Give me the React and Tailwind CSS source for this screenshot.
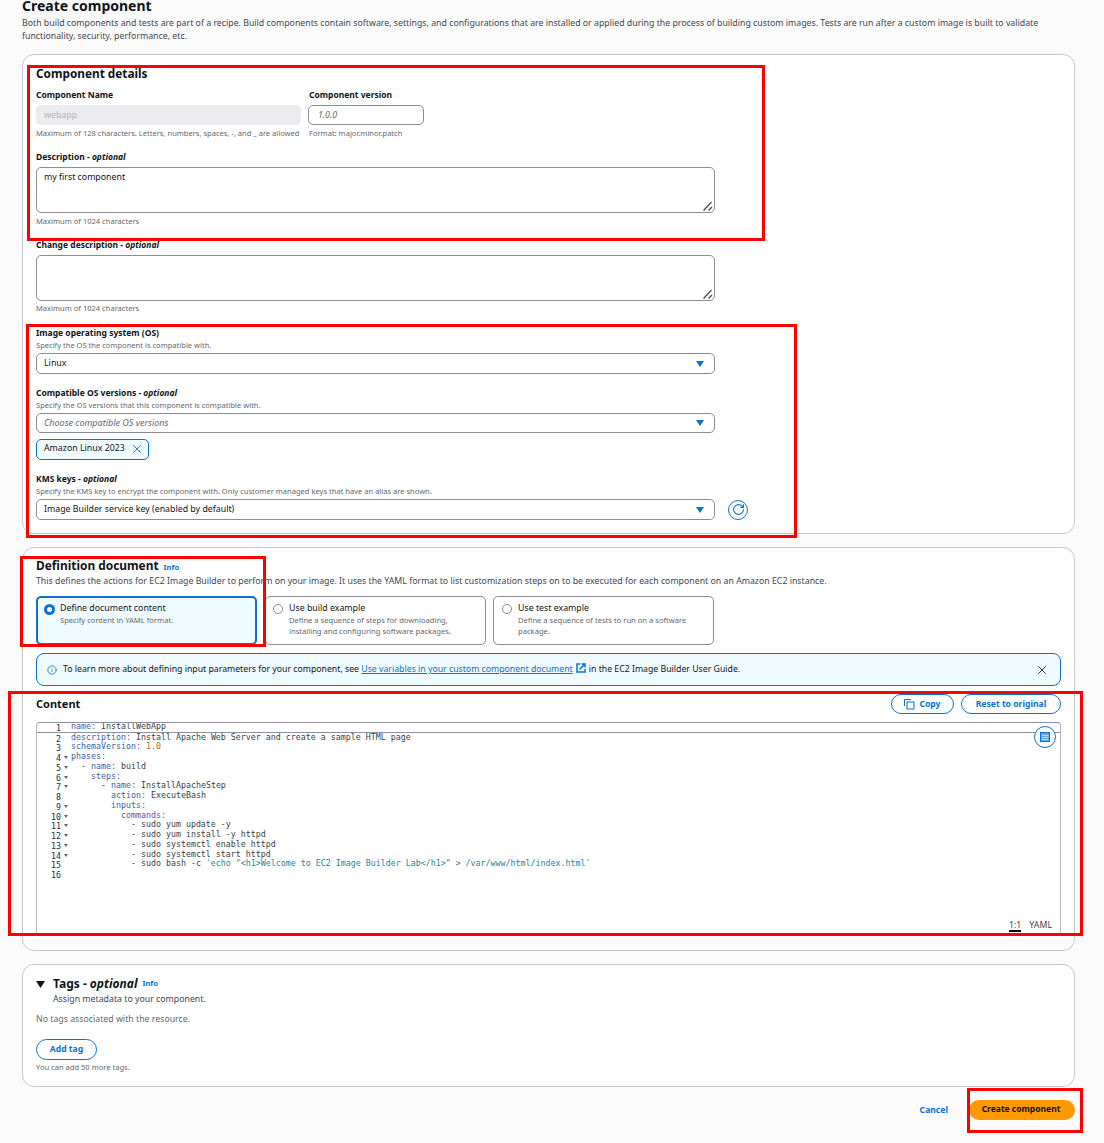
import React from "react";
import { X, RotateCw, Info } from "lucide-react";

const K = "text-[#3d62a8]";
const V = "text-[#3a3f48]";
const N = "text-[#b86a0c]";
const S = "text-[#2f8296]";
const P = "text-[#6a4fb0]";

const codeLines = [
  { fold: false, parts: [["name:", K], [" InstallWebApp", V]] },
  { fold: false, parts: [["description:", K], [" Install Apache Web Server and create a sample HTML page", V]] },
  { fold: false, parts: [["schemaVersion:", K], [" ", V], ["1.0", N]] },
  { fold: true, parts: [["phases:", K]] },
  { fold: true, parts: [["  - ", V], ["name:", K], [" build", V]] },
  { fold: true, parts: [["    ", V], ["steps:", K]] },
  { fold: true, parts: [["      - ", V], ["name:", K], [" InstallApacheStep", V]] },
  { fold: false, parts: [["        ", V], ["action:", K], [" ExecuteBash", V]] },
  { fold: true, parts: [["        ", V], ["inputs:", K]] },
  { fold: true, parts: [["          ", V], ["commands:", P]] },
  { fold: true, parts: [["            - sudo yum update -y", V]] },
  { fold: true, parts: [["            - sudo yum install -y httpd", V]] },
  { fold: true, parts: [["            - sudo systemctl enable httpd", V]] },
  { fold: true, parts: [["            - sudo systemctl start httpd", V]] },
  { fold: false, parts: [["            - sudo bash -c ", V], ["'echo \"<h1>Welcome to EC2 Image Builder Lab</h1>\" > /var/www/html/index.html'", S]] },
  { fold: false, parts: [] },
];

function Label({ children, optional }) {
  return (
    <div className="text-[8.5px] leading-[12px] font-bold text-[#0f141a]">
      {children}
      {optional && (
        <>
          {" - "}
          <i>optional</i>
        </>
      )}
    </div>
  );
}

function Hint({ children, className = "" }) {
  return <div className={`text-[7.56px] leading-[11px] text-[#656871] ${className}`}>{children}</div>;
}

function Area({ value }) {
  return (
    <div className="relative w-[679px] h-[46px]">
      <textarea
        defaultValue={value}
        className="block w-full h-full resize-none border border-[#8c8c94] rounded-[5px] bg-white px-[7px] py-[3px] text-[8.8px] leading-[12px] text-[#0f141a] outline-none"
      />
      <svg width="10" height="10" viewBox="0 0 10 10" className="absolute right-[2px] bottom-[2px]">
        <path d="M0.5 9.5 L8.5 1" stroke="#424650" strokeWidth="1.2" />
        <path d="M5.5 9.5 L9 6" stroke="#424650" strokeWidth="1.2" />
      </svg>
    </div>
  );
}

function Caret() {
  return (
    <svg width="8" height="6" viewBox="0 0 8 6" className="shrink-0">
      <path d="M0 0 H8 L4 6 Z" fill="#0972d3" />
    </svg>
  );
}

function Select({ text, placeholder, h = "h-[21px]" }) {
  return (
    <div className={`w-[679px] ${h} border border-[#8c8c94] rounded-[5px] bg-white flex items-center justify-between pl-[7px] pr-[10px]`}>
      <span className={placeholder ? "text-[9px] italic text-[#656871]" : "text-[8.8px] text-[#0f141a]"}>{text}</span>
      <Caret />
    </div>
  );
}

function Tile({ selected, wide, title, desc, className = "" }) {
  const box = selected
    ? "border-2 border-[#0972d3] bg-[#f0fbff] pl-[6px] gap-[5px] pt-[4px]"
    : wide
    ? "border border-[#8c8c94] bg-white pl-[8px] gap-[6px] pt-[5px]"
    : "border border-[#8c8c94] bg-white pl-[7px] gap-[6px] pt-[5px]";
  return (
    <div className={`h-[49px] rounded-[5px] flex ${box} ${className}`}>
      {selected ? (
        <span className="mt-[2px] w-[11px] h-[11px] rounded-full border-[3px] border-[#0972d3] bg-white shrink-0" />
      ) : (
        <span className="mt-[2px] w-[10px] h-[10px] rounded-full border border-[#8c8c94] bg-white shrink-0" />
      )}
      <div>
        <div className="text-[8.8px] leading-[13px] text-[#0f141a]">{title}</div>
        <div className="text-[7.6px] leading-[11px] text-[#656871]">{desc}</div>
      </div>
    </div>
  );
}

function PillButton({ children, className = "" }) {
  return (
    <button className={`h-[20px] rounded-full border border-[#0972d3] bg-white text-[#0972d3] text-[8.6px] font-bold flex items-center justify-center gap-1 ${className}`}>
      {children}
    </button>
  );
}

function RedBox({ className }) {
  return <div className={`absolute border-[3px] border-[#ff0000] pointer-events-none ${className}`} />;
}

export default function App() {
  return (
    <div className="relative w-[1104px] h-[1143px] overflow-hidden bg-[#fbfbfb] font-['Noto_Sans','Open_Sans',sans-serif] pl-[22px]">
      <h1 className="text-[14px] leading-[14px] font-bold text-[#0f141a] -mt-[1px]">Create component</h1>
      <p className="mt-[4px] w-[1040px] text-[8.78px] leading-[13px] text-[#424650]">
        Both build components and tests are part of a recipe. Build components contain software, settings, and configurations that are installed or applied during the process of building custom images. Tests are run after a custom image is built to validate functionality, security, performance, etc.
      </p>

      <section className="mt-[11px] w-[1053px] h-[480px] bg-white border border-[#c6c6cd] rounded-[12px] pl-[13px] pt-[10px]">
        <h2 className="text-[11.8px] leading-[16px] font-bold text-[#0f141a]">Component details</h2>
        <div className="mt-[8px] flex gap-[7px]">
          <div className="w-[265px]">
            <Label>Component Name</Label>
            <div className="mt-[4px] h-[20px] rounded-[5px] bg-[#ebebf0] flex items-center pl-2 pt-[1px] text-[8.8px] text-[#b4b4bb]">webapp</div>
            <Hint className="mt-[3px] whitespace-nowrap">Maximum of 128 characters. Letters, numbers, spaces, -, and _ are allowed</Hint>
          </div>
          <div className="w-[116px]">
            <div className="ml-[1px]"><Label>Component version</Label></div>
            <div className="mt-[4px] h-[20px] rounded-[5px] border border-[#8c8c94] bg-white flex items-center pl-[9px] pt-[1px] text-[8.8px] italic text-[#656871]">1.0.0</div>
            <Hint className="mt-[3px] ml-[1px]">Format: major.minor.patch</Hint>
          </div>
        </div>

        <div className="mt-[12px]"><Label optional>Description</Label></div>
        <div className="mt-[4px]"><Area value="my first component" /></div>
        <Hint className="mt-[3px]">Maximum of 1024 characters</Hint>

        <div className="mt-[12px]"><Label optional>Change description</Label></div>
        <div className="mt-[4px]"><Area value="" /></div>
        <Hint className="mt-[2px]">Maximum of 1024 characters</Hint>

        <div className="mt-[13px]"><Label>Image operating system (OS)</Label></div>
        <Hint className="mt-[1px]">Specify the OS the component is compatible with.</Hint>
        <div className="mt-[2px]"><Select text="Linux" /></div>

        <div className="mt-[13px]"><Label optional>Compatible OS versions</Label></div>
        <Hint className="mt-[1px]">Specify the OS versions that this component is compatible with.</Hint>
        <div className="mt-[2px]"><Select text="Choose compatible OS versions" placeholder h="h-[20px]" /></div>
        <div className="mt-[6px] w-[113px] h-[21px] rounded-[5px] border border-[#0972d3] bg-[#f0fbff] flex items-center pl-[7px] pb-[1px] gap-[5px] text-[8.8px] text-[#0f141a]">
          Amazon Linux 2023
          <X size={14} strokeWidth={1.5} className="text-[#0972d3]" />
        </div>

        <div className="mt-[13px]"><Label optional>KMS keys</Label></div>
        <Hint className="mt-[1px]">Specify the KMS key to encrypt the component with. Only customer managed keys that have an alias are shown.</Hint>
        <div className="mt-[2px] flex items-center gap-[13px]">
          <Select text="Image Builder service key (enabled by default)" />
          <span className="w-[20px] h-[20px] rounded-full border border-[#0972d3] flex items-center justify-center">
            <RotateCw size={13} strokeWidth={2} className="text-[#0972d3]" />
          </span>
        </div>
      </section>

      <section className="mt-[13px] w-[1053px] h-[404px] bg-white border border-[#c6c6cd] rounded-[12px] pl-[13px] pr-[13px] pt-[9px]">
        <div className="flex items-baseline gap-[5px]">
          <h2 className="text-[11.9px] leading-[16px] font-bold text-[#0f141a]">Definition document</h2>
          <span className="text-[7.6px] font-bold text-[#0972d3]">Info</span>
        </div>
        <p className="mt-[2px] text-[8.78px] leading-[13px] text-[#424650]">
          This defines the actions for EC2 Image Builder to perform on your image. It uses the YAML format to list customization steps on to be executed for each component on an Amazon EC2 instance.
        </p>
        <div className="mt-[8px] flex">
          <Tile selected className="w-[221px]" title="Define document content" desc="Specify content in YAML format." />
          <Tile className="w-[221px] ml-[8px]" title="Use build example" desc={<>Define a sequence of steps for downloading,<br />installing and configuring software packages.</>} />
          <Tile wide className="w-[221px] ml-[7px]" title="Use test example" desc={<>Define a sequence of tests to run on a software<br />package.</>} />
        </div>

        <div className="mt-[8px] h-[33px] rounded-[8px] border border-[#0972d3] bg-[#f0fbff] flex items-center pl-[10px] pr-[11px]">
          <Info size={10} strokeWidth={2} className="text-[#0972d3] shrink-0" />
          <span className="ml-[6px] text-[8.72px] text-[#0f141a] whitespace-nowrap">
            To learn more about defining input parameters for your component, see{" "}
            <span className="text-[#0972d3] underline">Use variables in your custom component document</span>
            <svg width="10" height="10" viewBox="0 0 10 10" fill="none" stroke="#0972d3" strokeWidth="1.5" className="inline ml-[3px] mr-[3px] align-[-1px]">
              <path d="M4 1 H1 V9 H9 V6" />
              <path d="M3.5 6.5 L8.5 1.5 M5.5 1 H9 V4.5" />
            </svg>
            in the EC2 Image Builder User Guide.
          </span>
          <X size={14} strokeWidth={1.6} className="ml-auto text-[#2a2e33]" />
        </div>

        <div className="mt-[8px] flex items-center justify-between">
          <h3 className="text-[11px] font-bold text-[#0f141a]">Content</h3>
          <div className="flex gap-[7px]">
            <PillButton className="w-[63px]">
              <svg width="11" height="11" viewBox="0 0 11 11" fill="none" stroke="#0972d3" strokeWidth="1">
                <path d="M0.5 7 V0.5 H7" />
                <rect x="3" y="3" width="7" height="7" />
              </svg>
              Copy
            </PillButton>
            <PillButton className="w-[100px]">Reset to original</PillButton>
          </div>
        </div>

        <div className="relative mt-[8px] h-[214px] border border-[#b4b4bb] border-t-[#8f8fa8] rounded-t-[4px] bg-white font-['DejaVu_Sans_Mono',monospace] text-[8.3px] leading-[9.75px] overflow-hidden">
          <div className="-mt-[1.5px]">
            {codeLines.map((line, i) => (
              <div key={i} className={`flex h-[9.75px] ${i === 0 ? "border-b border-[#8f8fa8] box-content" : ""}`}>
                <span className="w-[24px] text-right text-[#2a2e33] pt-[2px]">{i + 1}</span>
                <span className="w-[10px] pl-[3px] pt-[4px]">
                  {line.fold && (
                    <svg width="4" height="3" viewBox="0 0 4 3" className="block">
                      <path d="M0 0 H4 L2 3 Z" fill="#656871" />
                    </svg>
                  )}
                </span>
                <span className="whitespace-pre">
                  {line.parts.map(([t, c], j) => (
                    <span key={j} className={c}>{t}</span>
                  ))}
                </span>
              </div>
            ))}
          </div>
          <span className="absolute right-[4px] top-[3px] w-[22px] h-[22px] rounded-full border border-[#0972d3] bg-white flex items-center justify-center">
            <svg width="10" height="10" viewBox="0 0 10 10">
              <rect x="0.5" y="0.5" width="9" height="9" fill="#6aa6e0" stroke="#0972d3" />
              <path d="M2 3.5 H8 M2 5.5 H8 M2 7.5 H8" stroke="#dcecfa" strokeWidth="0.7" />
            </svg>
          </span>
          <div className="absolute right-[8px] bottom-[3px] flex items-start gap-[8px] font-['Noto_Sans',sans-serif] text-[8.8px] text-[#3a3f48]">
            <span className="leading-[9px] border-b-2 border-dashed border-black">1:1</span>
            <span className="leading-[9px]">YAML</span>
          </div>
        </div>
      </section>

      <section className="mt-[13px] w-[1053px] h-[123px] bg-white border border-[#c6c6cd] rounded-[12px] pl-[13px] pt-[11px]">
        <div className="flex items-center">
          <svg width="9" height="7" viewBox="0 0 9 7" className="mr-[8px]">
            <path d="M0 0 H9 L4.5 7 Z" fill="#0f141a" />
          </svg>
          <span className="text-[12px] leading-[16px] font-bold text-[#0f141a]">Tags - <i>optional</i></span>
          <span className="ml-[5px] text-[7.6px] font-bold text-[#0972d3]">Info</span>
        </div>
        <div className="ml-[17px] mt-[1px] text-[8.78px] leading-[13px] text-[#424650]">Assign metadata to your component.</div>
        <div className="mt-[7px] text-[8.78px] leading-[13px] text-[#656871]">No tags associated with the resource.</div>
        <PillButton className="mt-[13px] w-[61px] h-[21px]">Add tag</PillButton>
        <Hint className="mt-[2px]">You can add 50 more tags.</Hint>
      </section>

      <div className="mt-[13px] w-[1053px] flex items-center justify-end gap-[21px]">
        <span className="text-[8.6px] font-bold text-[#0972d3]">Cancel</span>
        <button className="w-[106px] h-[20px] rounded-full bg-[#ff9900] text-[8.5px] leading-[18px] pb-[2px] pr-[2px] font-bold text-[#0f141a]">Create component</button>
      </div>

      <RedBox className="left-[27px] top-[65px] w-[738px] h-[176px]" />
      <RedBox className="left-[26px] top-[324px] w-[771px] h-[214px]" />
      <RedBox className="left-[20px] top-[556px] w-[246px] h-[91px]" />
      <RedBox className="left-[8px] top-[691px] w-[1075px] h-[245px]" />
      <RedBox className="left-[967px] top-[1088px] w-[116px] h-[45px]" />
    </div>
  );
}
